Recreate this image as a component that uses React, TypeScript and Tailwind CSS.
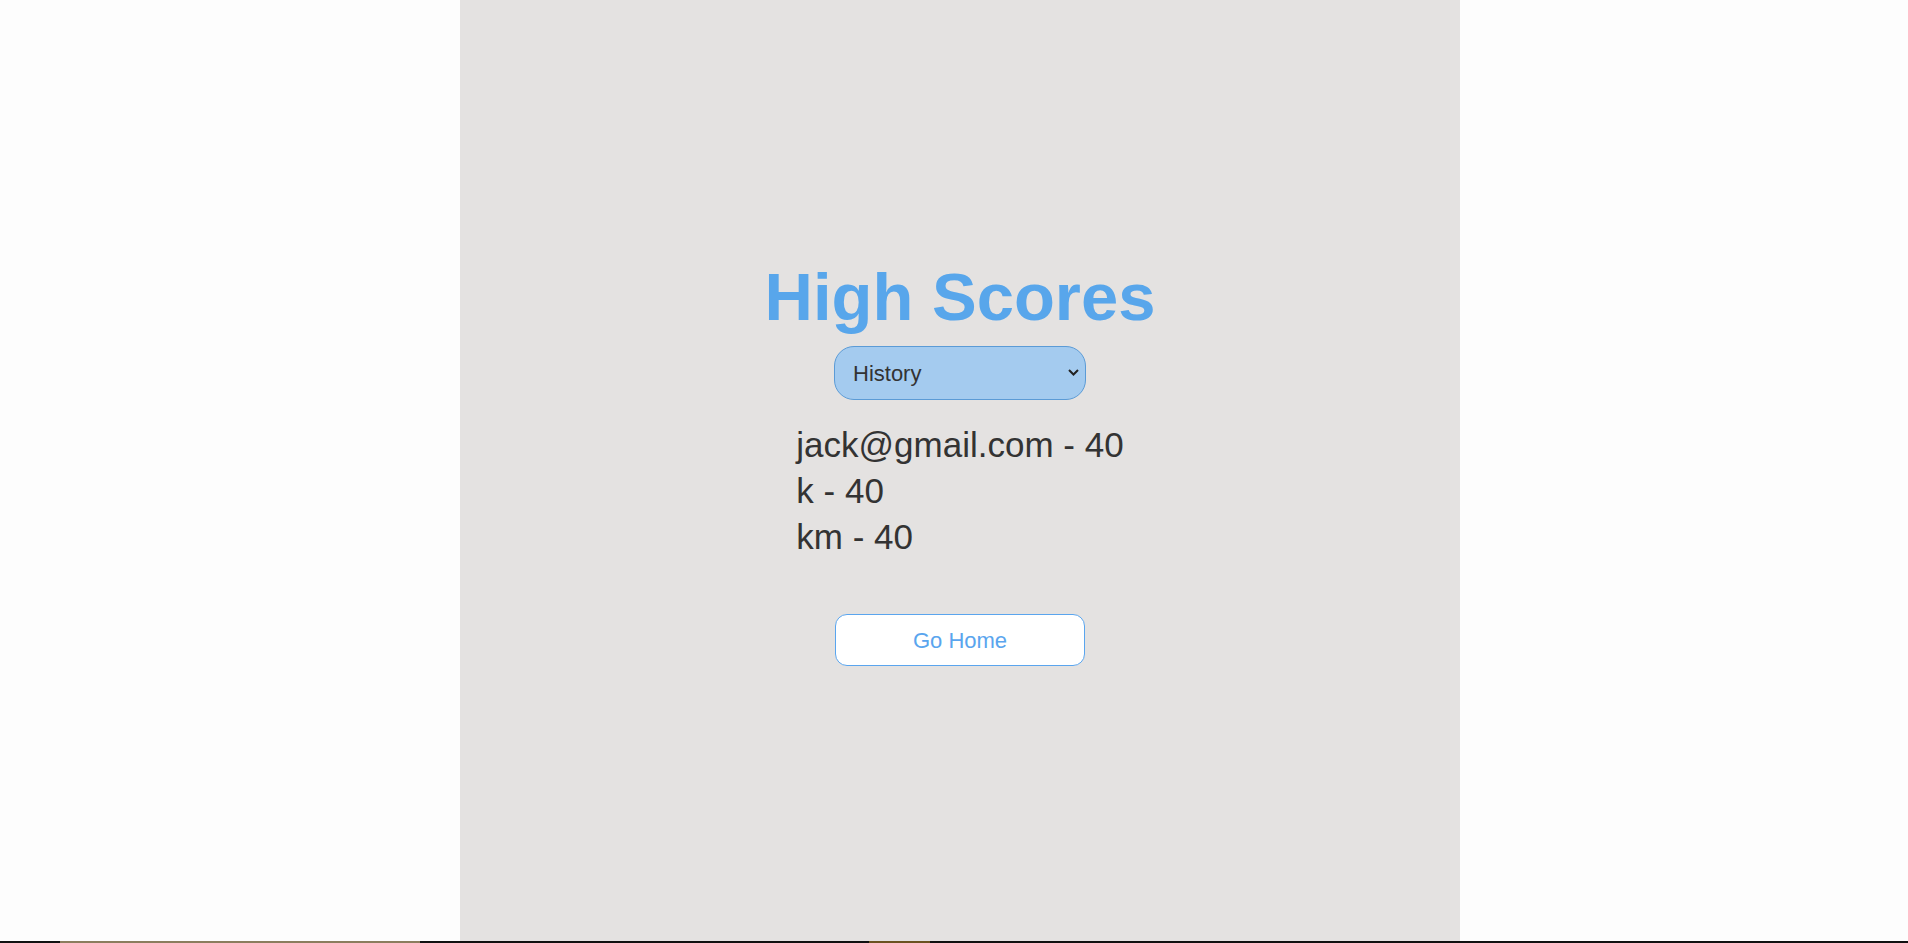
import React, { useState } from "react";

const scores = [
    { user: "jack@gmail.com", score: 40 },
    { user: "k", score: 40 },
    { user: "km", score: 40 },
];

const App = () => {
    const [category, setCategory] = useState("History");

    return (
        <div className="w-full h-[943px] bg-[#fdfdfd] flex flex-col overflow-hidden" style={{ fontFamily: '"Liberation Sans", Arial, sans-serif' }}>
            <div className="flex h-[941px]">
                <div className="ml-[460px] w-[1000px] h-full bg-[#e4e2e1] flex flex-col items-center pt-[263px]">
                    <h1 className="text-[67px] leading-[67px] font-bold text-[#58a6eb]">High Scores</h1>

                    <div className="relative mt-[16px] w-[252px] h-[54px]">
                        <select
                            value={category}
                            onChange={e => setCategory(e.target.value)}
                            className="appearance-none w-full h-full rounded-[20px] border border-[#5b9bd6] bg-[#a4cbef] pl-[18px] text-[22px] text-[#333] outline-none"
                        >
                            <option>History</option>
                            <option>Science</option>
                            <option>Sports</option>
                        </select>
                        {/* chevron */}
                        <svg className="absolute right-[7px] top-[23px] pointer-events-none" width="11" height="7" viewBox="0 0 11 7" fill="none">
                            <path d="M1 1l4.5 4.5L10 1" stroke="#222" strokeWidth="2" />
                        </svg>
                    </div>

                    <div className="mt-[22px] text-left text-[35px] leading-[46px] text-[#333]">
                        {scores.map(s => (
                            <p key={s.user}>{s.user} - {s.score}</p>
                        ))}
                    </div>

                    <button className="mt-[54px] w-[250px] h-[52px] rounded-[12px] border border-[#5aa5ee] bg-white text-[22px] text-[#5aa5ee]">
                        Go Home
                    </button>
                </div>
            </div>
            <div className="flex h-[2px] bg-[#111]">
                <div className="ml-[60px] w-[360px] bg-[#8b7d5e]"></div>
                <div className="ml-[449px] w-[61px] bg-[#6b5220]"></div>
            </div>
        </div>
    );
};

export default App;
